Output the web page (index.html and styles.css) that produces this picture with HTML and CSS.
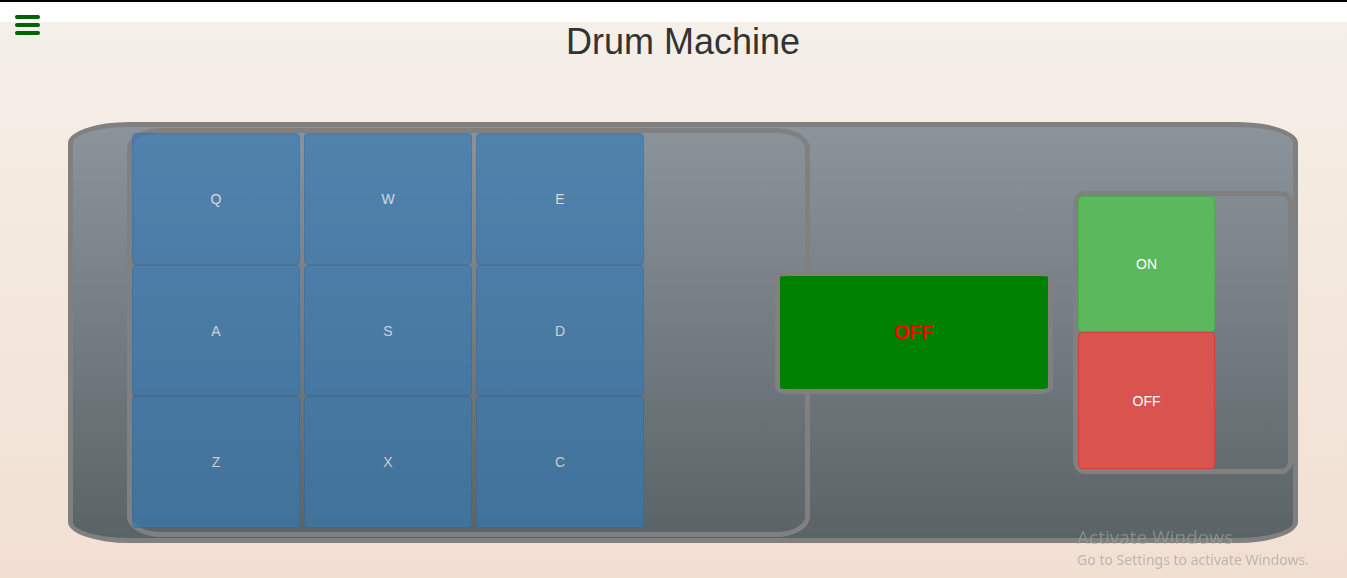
FILE: index.html
```html
<!DOCTYPE html>
<html lang="en">
<head>
<meta charset="utf-8">
<meta name="viewport" content="width=device-width, initial-scale=1">
<title>Drum Machine</title>
<link rel="stylesheet" href="styles.css">
</head>
<body>
<button class="menu" type="button" aria-label="Menu">
  <svg width="25" height="20" viewBox="0 0 25 20" aria-hidden="true"><rect width="25" height="4" rx="2"/><rect y="8" width="25" height="4" rx="2"/><rect y="16" width="25" height="4" rx="2"/></svg>
</button>
<main class="page">
  <h1 class="title">Drum Machine</h1>
  <section class="machine">
    <div class="pads">
      <button class="pad" type="button" disabled>Q</button>
      <button class="pad" type="button" disabled>W</button>
      <button class="pad" type="button" disabled>E</button>
      <button class="pad" type="button" disabled>A</button>
      <button class="pad" type="button" disabled>S</button>
      <button class="pad" type="button" disabled>D</button>
      <button class="pad" type="button" disabled>Z</button>
      <button class="pad" type="button" disabled>X</button>
      <button class="pad" type="button" disabled>C</button>
    </div>
    <div class="display">OFF</div>
    <div class="power">
      <button class="switch switch-on" type="button">ON</button>
      <button class="switch switch-off" type="button">OFF</button>
    </div>
  </section>
</main>
<aside class="notice">
  <p class="notice-title">Activate Windows</p>
  <p class="notice-text">Go to Settings to activate Windows.</p>
</aside>
</body>
</html>
```

FILE: styles.css
```css
* {
  box-sizing: border-box;
}

html {
  min-height: 100%;
  background: #fff;
  border-top: 2px solid #000;
}

body {
  margin: 20px 0 0;
  min-height: calc(100vh - 22px);
  background: linear-gradient(#f4efe9, #f6ede7 16%, #f4ebe1 24%, #f2e2d6 84%, #f1dfd2);
  color: #333;
  font-family: "Liberation Sans", Arial, sans-serif;
  font-size: 14px;
  line-height: 20px;
}

.menu {
  position: absolute;
  top: 15px;
  left: 15px;
  display: flex;
  padding: 0;
  border: 0;
  background: none;
  fill: #006400;
}

.page {
  padding: 0 49px 35px 68px;
}

.title {
  margin: 0 0 60px;
  font-size: 36px;
  font-weight: 400;
  line-height: 40px;
  text-align: center;
}

.machine {
  display: grid;
  grid-template-columns: 648fr 278fr 240fr;
  align-items: center;
  padding: 1px 0 1px 54px;
  border: 5px solid gray;
  border-radius: 5%;
  background: linear-gradient(#8b949b, #6c747c 65%, #697274 70%, #5a6365);
}

.pads {
  display: grid;
  grid-template-columns: repeat(3, 168px);
  grid-template-rows: 132px 131px 132px;
  column-gap: 4px;
  margin-right: -35px;
  padding-bottom: 4px;
  border: 5px solid gray;
  border-radius: 5%;
}

.pad,
.switch {
  padding: 0;
  border: 1px solid;
  border-radius: 4px;
  color: #fff;
  font: inherit;
}

.pad {
  border-color: #2e6da4;
  background: #337ab7;
  opacity: 0.65;
}

.display {
  display: flex;
  align-items: center;
  justify-content: center;
  height: 123px;
  padding-bottom: 2px;
  border: 5px solid gray;
  border-radius: 5%;
  background: #008000;
  color: #f00;
  font-size: 20px;
  font-weight: 700;
}

.power {
  display: grid;
  grid-template-columns: 137px;
  grid-template-rows: 136px 137px;
  margin-left: 20px;
  border: 5px solid gray;
  border-radius: 5%;
}

.switch-on {
  border-color: #4cae4c;
  background: #5cb85c;
}

.switch-off {
  border-color: #d43f3a;
  background: #d9534f;
}

.notice {
  position: fixed;
  right: 38px;
  bottom: 8px;
  color: rgba(160, 160, 160, 0.65);
  font-family: "Noto Sans", "Open Sans", sans-serif;
}

.notice p {
  margin: 0;
}

.notice-title {
  font-family: "Open Sans", "Noto Sans", sans-serif;
  font-size: 19px;
  line-height: 26px;
}

.notice-text {
  font-size: 14px;
}
```
